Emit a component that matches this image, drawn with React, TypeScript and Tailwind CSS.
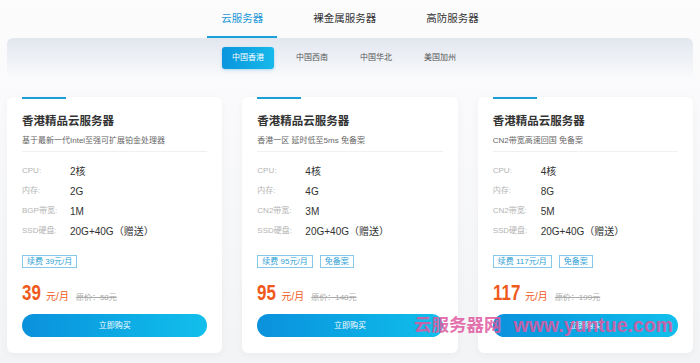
import React from 'react';

type Plan = {
  desc: string;
  cpu: string;
  mem: string;
  bwLabel: string;
  bw: string;
  disk: string;
  renew: string;
  noRecord: boolean;
  price: string;
  original: string;
};

const plans: Plan[] = [
  {
    desc: '基于最新一代Intel至强可扩展铂金处理器',
    cpu: '2核',
    mem: '2G',
    bwLabel: 'BGP带宽:',
    bw: '1M',
    disk: '20G+40G（赠送）',
    renew: '续费 39元/月',
    noRecord: false,
    price: '39',
    original: '原价：58元',
  },
  {
    desc: '香港一区 延时低至5ms 免备案',
    cpu: '4核',
    mem: '4G',
    bwLabel: 'CN2带宽:',
    bw: '3M',
    disk: '20G+40G（赠送）',
    renew: '续费 95元/月',
    noRecord: true,
    price: '95',
    original: '原价：148元',
  },
  {
    desc: 'CN2带宽高速回国 免备案',
    cpu: '4核',
    mem: '8G',
    bwLabel: 'CN2带宽:',
    bw: '5M',
    disk: '20G+40G（赠送）',
    renew: '续费 117元/月',
    noRecord: true,
    price: '117',
    original: '原价：199元',
  },
];

const tabs = ['云服务器', '裸金属服务器', '高防服务器'];
const regions = ['中国香港', '中国西南', '中国华北', '美国加州'];

function SpecRow({ label, value }: { label: string; value: string }) {
  return (
    <div className="flex items-center h-[20px]">
      <span className="w-[48px] text-[8px] text-[#b4b4b4]">{label}</span>
      <span className="text-[10px] text-[#333]">{value}</span>
    </div>
  );
}

function PlanCard({ plan }: { plan: Plan }) {
  // price digits are squeezed horizontally, so pull the unit back by the freed width
  const squeeze = plan.price.length * 11.7 * 0.23;
  return (
    <div className="relative bg-white rounded-[6px] shadow-[0_2px_8px_rgba(0,0,0,0.04)] px-[15px] pt-[16px] pb-[16px]">
      <div className="absolute left-[15px] top-0 w-[44px] h-[2px] bg-[#1a9fd8]" />
      <div className="text-[11.5px] font-bold text-[#333] leading-[16px]">香港精品云服务器</div>
      <div className="mt-[6px] text-[8px] text-[#666] leading-[12px]">{plan.desc}</div>
      <div className="mt-[4px] border-t border-[#f0f0f0]" />

      {/* specs */}
      <div className="mt-[9px]">
        <SpecRow label="CPU:" value={plan.cpu} />
        <SpecRow label="内存:" value={plan.mem} />
        <SpecRow label={plan.bwLabel} value={plan.bw} />
        <SpecRow label="SSD硬盘:" value={plan.disk} />
      </div>

      <div className="mt-[14px] flex gap-[7px]">
        <span className="h-[13px] px-[4px] flex items-center border border-[#86c8e8] text-[8px] text-[#2d9fd5]">
          {plan.renew}
        </span>
        {plan.noRecord && (
          <span className="h-[13px] px-[4px] flex items-center border border-[#86c8e8] text-[8px] text-[#2d9fd5]">
            免备案
          </span>
        )}
      </div>

      <div className="mt-[14px] flex items-baseline h-[24px]">
        <span
          className="inline-block origin-left scale-x-[0.77] text-[22px] font-bold text-[#ef5a1c] leading-none"
          style={{ marginRight: -squeeze }}
        >
          {plan.price}
        </span>
        <span className="ml-[5px] text-[10px] text-[#ef5a1c]">元/月</span>
        <span className="ml-[7px] text-[8px] text-[#aaa] line-through">{plan.original}</span>
      </div>

      <button className="mt-[8px] w-full h-[23px] rounded-full bg-gradient-to-r from-[#0b91dc] to-[#12bfeb] text-white text-[8px] flex items-center justify-center">
        立即购买
      </button>
    </div>
  );
}

export default function App() {
  return (
    <div className="relative h-[363px] overflow-hidden bg-gradient-to-b from-[#fcfcfd] to-[#f3f4f6] font-['Liberation_Sans','Noto_Sans_CJK_SC',sans-serif]">
      {/* Top tabs */}
      <div className="flex justify-center gap-[22px] h-[38px]">
        {tabs.map((t, i) => (
          <div
            key={t}
            className={
              i === 0
                ? 'px-[14px] flex items-center text-[10.5px] text-[#1a96d6] border-b-2 border-[#1a9fd8] pt-[2px]'
                : 'px-[14px] flex items-center text-[10.5px] text-[#333] border-b-2 border-transparent pt-[2px]'
            }
          >
            {t}
          </div>
        ))}
      </div>

      {/* Region bar */}
      <div className="mx-[7px] h-[42px] rounded-t-[6px] bg-gradient-to-b from-[#e2e7ef] to-[#fafbfc] flex justify-center items-start pt-[9px] pr-[12px] gap-[12px]">
        {regions.map((r, i) => (
          <div
            key={r}
            className={
              i === 0
                ? 'h-[22px] px-[10px] flex items-center rounded-[3px] bg-gradient-to-r from-[#0a95dd] to-[#17b9ea] text-white text-[8px] shadow-[0_1px_3px_rgba(10,150,220,0.3)]'
                : 'h-[22px] px-[10px] flex items-center text-[8px] text-[#555]'
            }
          >
            {r}
          </div>
        ))}
      </div>

      {/* Cards */}
      <div className="grid grid-cols-3 gap-[20px] px-[7px] pt-[17px]">
        {plans.map((p) => (
          <PlanCard key={p.price} plan={p} />
        ))}
      </div>

      {/* Watermark */}
      <div className="absolute left-[414px] top-[316px] flex items-center gap-[12px] text-[#e0589f] opacity-85 pointer-events-none">
        <span className="text-[17.5px] font-bold leading-none">云服务器网</span>
        <span className="text-[19.5px] font-bold leading-none">www.yuntue.com</span>
      </div>
    </div>
  );
}
